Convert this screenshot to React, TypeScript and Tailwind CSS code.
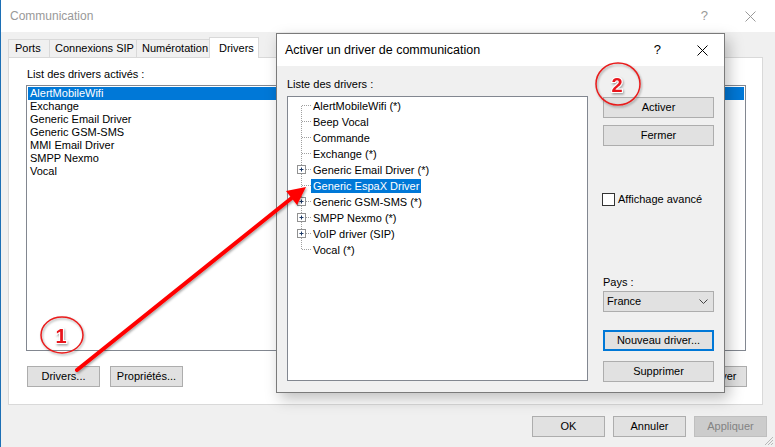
import React from 'react';

const backItems = ['AlertMobileWifi', 'Exchange', 'Generic Email Driver', 'Generic GSM-SMS', 'MMI Email Driver', 'SMPP Nexmo', 'Vocal'];

const treeItems = [
    { text: 'AlertMobileWifi (*)', plus: false },
    { text: 'Beep Vocal', plus: false },
    { text: 'Commande', plus: false },
    { text: 'Exchange (*)', plus: false },
    { text: 'Generic Email Driver (*)', plus: true },
    { text: 'Generic EspaX Driver', plus: false, selected: true },
    { text: 'Generic GSM-SMS (*)', plus: true },
    { text: 'SMPP Nexmo (*)', plus: true },
    { text: 'VoIP driver (SIP)', plus: true },
    { text: 'Vocal (*)', plus: false },
];

const CloseX = ({ color }: { color: string }) => (
    <svg width="11" height="11" viewBox="0 0 11 11" className="shrink-0">
        <path d="M0.5 0.5 L10.5 10.5 M10.5 0.5 L0.5 10.5" stroke={color} strokeWidth="1" />
    </svg>
);

const Btn = ({ children, className = '' }: { children: React.ReactNode; className?: string }) => (
    <div className={`h-[21px] w-[73px] flex items-center justify-center bg-[#e1e1e1] border border-[#adadad] ${className}`}>
        {children}
    </div>
);

const TreeRow = ({ item, first, last }: { item: typeof treeItems[number]; first: boolean; last: boolean }) => (
    <div className="h-4 flex items-center">
        <svg width="23" height="16" viewBox="0 0 23 16" className="shrink-0">
            <line x1="13.5" y1={first ? 8 : 0} x2="13.5" y2={last ? 8 : 16} stroke="#a0a0a0" strokeDasharray="1 1" />
            <line x1="14" y1="7.5" x2="23" y2="7.5" stroke="#a0a0a0" strokeDasharray="1 1" />
            {item.plus && (
                <g>
                    <rect x="9.5" y="3.5" width="8" height="8" fill="#fff" stroke="#919191" />
                    <path d="M11.5 7.5 H15.5 M13.5 5.5 V9.5" stroke="#1e3a66" />
                </g>
            )}
        </svg>
        <span className={`px-[2px] leading-[14px] whitespace-nowrap ${item.selected ? 'bg-[#0078d7] text-white' : ''}`}>{item.text}</span>
    </div>
);

const App: React.FC = () => {
    return (
        <div className="relative w-[775px] h-[447px] overflow-hidden bg-[#f0f0f0] border-l border-[#1c6fb5] font-['Liberation_Sans',Arial,sans-serif] text-[11px] text-black">
            {/* back window title bar */}
            <div className="h-[32px] bg-white flex items-center pl-[9px] pr-[19px]">
                <span className="text-[12px] text-[#999]">Communication</span>
                <span className="ml-auto text-[13px] text-[#999] mr-[37px]">?</span>
                <CloseX color="#999" />
            </div>

            {/* tabs */}
            <div className="pl-[7px] pt-[5px] flex items-end">
                <div className="h-[18px] w-[42px] border border-b-0 border-[#d9d9d9] flex items-center pl-[6px]">Ports</div>
                <div className="h-[18px] w-[87px] border border-b-0 border-l-0 border-[#d9d9d9] flex items-center pl-[5px]">Connexions SIP</div>
                <div className="h-[18px] w-[74px] border border-b-0 border-l-0 border-[#d9d9d9] flex items-center pl-[5px]">Numérotation</div>
                <div className="relative z-10 h-[21px] w-[50px] -ml-[2px] -mb-px bg-white border border-b-0 border-[#d9d9d9] flex items-start pt-[2px] pl-[9px]">Drivers</div>
            </div>

            {/* tab panel */}
            <div className="ml-[7px] mr-[12px] h-[348px] bg-white border border-[#d9d9d9] pl-[17px] pr-[16px] pt-[10px]">
                <div className="leading-[13px] ml-px">List des drivers activés :</div>
                <div className="mt-[4px] h-[266px] border border-[#828790] p-px">
                    {backItems.map((t, i) => (
                        <div key={t} className={`h-[13px] leading-[13px] pl-[2px] ${i === 0 ? 'bg-[#0078d7] text-white' : ''}`}>{t}</div>
                    ))}
                </div>
                <div className="mt-[15px] flex gap-[10px] ml-px">
                    <Btn>Drivers...</Btn>
                    <Btn>Propriétés...</Btn>
                    <Btn className="ml-auto -mr-px">Désactiver</Btn>
                </div>
            </div>

            {/* bottom buttons */}
            <div className="mt-[11px] flex justify-end gap-[8px] pr-[8px]">
                <Btn>OK</Btn>
                <Btn>Annuler</Btn>
                <Btn className="!bg-[#cccccc] !border-[#bfbfbf] text-[#838383]">Appliquer</Btn>
            </div>

            {/* resize grip */}
            <svg width="12" height="12" viewBox="0 0 12 12" className="absolute right-[1px] bottom-[1px]">
                <path d="M11 3 L3 11 M11 6 L6 11 M11 9 L9 11" stroke="#b8b8b8" strokeWidth="1" />
            </svg>

            {/* foreground dialog */}
            <div className="absolute left-[275px] top-[33px] w-[449px] h-[360px] bg-[#f0f0f0] border border-[#7a7a7a] shadow-[4px_6px_14px_rgba(0,0,0,0.25)] flex flex-col">
                <div className="h-[32px] bg-white flex items-center pl-[8px] pr-[16px]">
                    <span className="text-[12.5px]">Activer un driver de communication</span>
                    <span className="ml-auto text-[13px] mr-[36px]">?</span>
                    <CloseX color="#000" />
                </div>
                <div className="flex pl-[10px]">
                    <div className="pt-[12px]">
                        <div className="leading-[13px]">Liste des drivers :</div>
                        <div className="mt-[5px] w-[301px] h-[285px] bg-white border border-[#828790] pt-px">
                            {treeItems.map((it, i) => (
                                <TreeRow key={it.text} item={it} first={i === 0} last={i === treeItems.length - 1} />
                            ))}
                        </div>
                    </div>
                    <div className="ml-[15px] w-[111px] pt-[31px] flex flex-col">
                        <Btn className="!w-[111px]">Activer</Btn>
                        <Btn className="!w-[111px] mt-[7px]">Fermer</Btn>
                        <div className="mt-[47px] flex items-center -ml-px h-[13px]">
                            <div className="w-[13px] h-[13px] bg-white border border-[#333]" />
                            <span className="ml-[3px]">Affichage avancé</span>
                        </div>
                        <div className="mt-[70px] leading-[13px]">Pays :</div>
                        <div className="mt-[2px] h-[21px] bg-[#e1e1e1] border border-[#adadad] flex items-center pl-[3px] pr-[5px]">
                            <span>France</span>
                            <svg width="9" height="5" viewBox="0 0 9 5" className="ml-auto">
                                <path d="M0.5 0.5 L4.5 4.5 L8.5 0.5" stroke="#444" fill="none" />
                            </svg>
                        </div>
                        <Btn className="!w-[111px] mt-[18px] !border-2 !border-[#0078d7]">Nouveau driver...</Btn>
                        <Btn className="!w-[111px] mt-[10px]">Supprimer</Btn>
                    </div>
                </div>
            </div>

            {/* annotations */}
            <svg width="775" height="447" viewBox="0 0 775 447" className="absolute left-0 top-0 pointer-events-none">
                <defs>
                    <filter id="sh" x="-20%" y="-20%" width="140%" height="140%">
                        <feDropShadow dx="1" dy="1.5" stdDeviation="1" floodColor="#000" floodOpacity="0.35" />
                    </filter>
                </defs>
                <g filter="url(#sh)">
                    <line x1="76" y1="370" x2="292" y2="197" stroke="#f00" strokeWidth="4" strokeLinecap="round" />
                    <polygon points="305,187 296,205 285,191" fill="#f00" />
                    <ellipse cx="61" cy="335" rx="21" ry="18" fill="none" stroke="#e81c1c" strokeWidth="1.5" />
                    <ellipse cx="617" cy="84" rx="22" ry="21" fill="none" stroke="#e81c1c" strokeWidth="1.5" />
                    <text x="60" y="343" textAnchor="middle" fontSize="20" fontWeight="bold" fontFamily="Liberation Sans, Arial, sans-serif" fill="#e8141c" stroke="#fff" strokeWidth="2" paintOrder="stroke">1</text>
                    <text x="616" y="92" textAnchor="middle" fontSize="20" fontWeight="bold" fontFamily="Liberation Sans, Arial, sans-serif" fill="#e8141c" stroke="#fff" strokeWidth="2" paintOrder="stroke">2</text>
                </g>
            </svg>
        </div>
    );
};

export default App;
